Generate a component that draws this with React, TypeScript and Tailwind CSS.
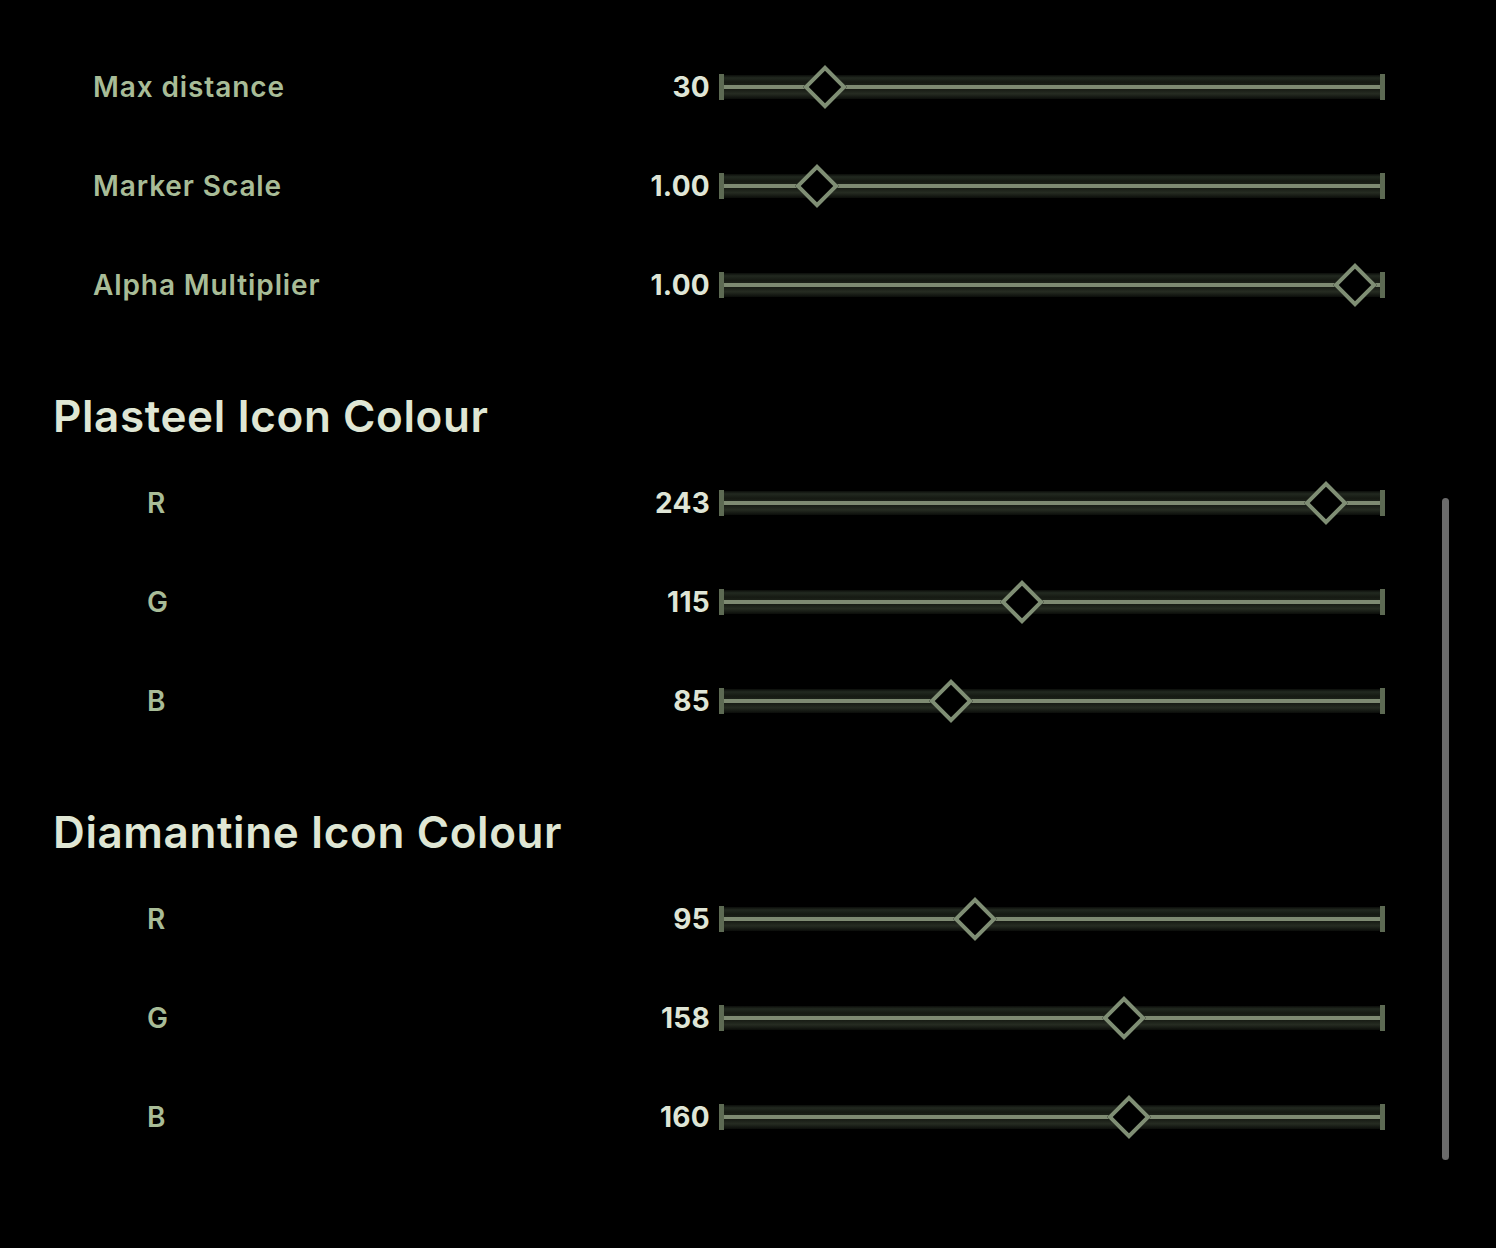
import type { CSSProperties } from 'react'

type Row = { label: string; value: string; pos: number }

const general: Row[] = [
    { label: 'Max distance', value: '30', pos: 0.125 },
    { label: 'Marker Scale', value: '1.00', pos: 0.112 },
    { label: 'Alpha Multiplier', value: '1.00', pos: 1 },
]

const rgb = (r: number, g: number, b: number): Row[] => [
    { label: 'R', value: String(r), pos: r / 255 },
    { label: 'G', value: String(g), pos: g / 255 },
    { label: 'B', value: String(b), pos: b / 255 },
]

const font: CSSProperties = { fontFamily: 'Inter, "Open Sans", sans-serif' }

const Slider = ({ pos }: { pos: number }) => {
    return (
        <div className="relative w-[666px] h-[26px] flex items-center">
            <div className="w-[5px] h-[26px] bg-[#5d6a53]" />
            <div className="flex-1 h-[24px] bg-[linear-gradient(to_bottom,#0b0d0a_0%,#222920_12%,#161a13_30%,#1c2119_42%,#7e8a72_42%,#7e8a72_58%,#171b14_58%,#262c22_78%,#0b0d0a_100%)]" />
            <div className="w-[5px] h-[26px] bg-[#5d6a53]" />
            {/* thumb travels between 30px insets on each side */}
            <div
                className="absolute top-1/2 -translate-x-1/2 -translate-y-1/2"
                style={{ left: 30 + pos * 606 }}
            >
                <div className="w-[31px] h-[31px] rotate-45 border-[4px] border-[#7f8e74] bg-black" />
            </div>
        </div>
    )
}

const SliderRow = ({ row, indent }: { row: Row; indent: string }) => {
    return (
        <div className="flex items-center h-[99px]">
            <div className={`w-[657px] flex items-center justify-between ${indent}`}>
                <span className="text-[28px] leading-[34px] font-semibold tracking-[0.9px] text-[#a8bc97]">{row.label}</span>
                <span className="text-[28px] leading-[34px] font-bold tracking-[0.3px] text-[#dfe5d6]">{row.value}</span>
            </div>
            <div className="ml-[9px]">
                <Slider pos={row.pos} />
            </div>
        </div>
    )
}

const Heading = ({ children }: { children: string }) => {
    return (
        <h2 className="mt-[58px] mb-[13px] text-[44px] leading-[48px] font-semibold tracking-[0.6px] text-[#dfe6d4]">
            {children}
        </h2>
    )
}

export default function App() {
    return (
        <div className="relative w-[1496px] h-[1248px] bg-black overflow-hidden" style={font}>
            <div className="pl-[53px] pt-[37px]">
                {general.map((r) => (
                    <SliderRow key={r.label} row={r} indent="pl-[40px]" />
                ))}

                <Heading>Plasteel Icon Colour</Heading>
                {rgb(243, 115, 85).map((r) => (
                    <SliderRow key={'p' + r.label} row={r} indent="pl-[94px]" />
                ))}

                <Heading>Diamantine Icon Colour</Heading>
                {rgb(95, 158, 160).map((r) => (
                    <SliderRow key={'d' + r.label} row={r} indent="pl-[94px]" />
                ))}
            </div>

            {/* scrollbar */}
            <div className="absolute left-[1442px] top-[498px] w-[7px] h-[662px] rounded-full bg-[#6b6b6b]" />
        </div>
    )
}
